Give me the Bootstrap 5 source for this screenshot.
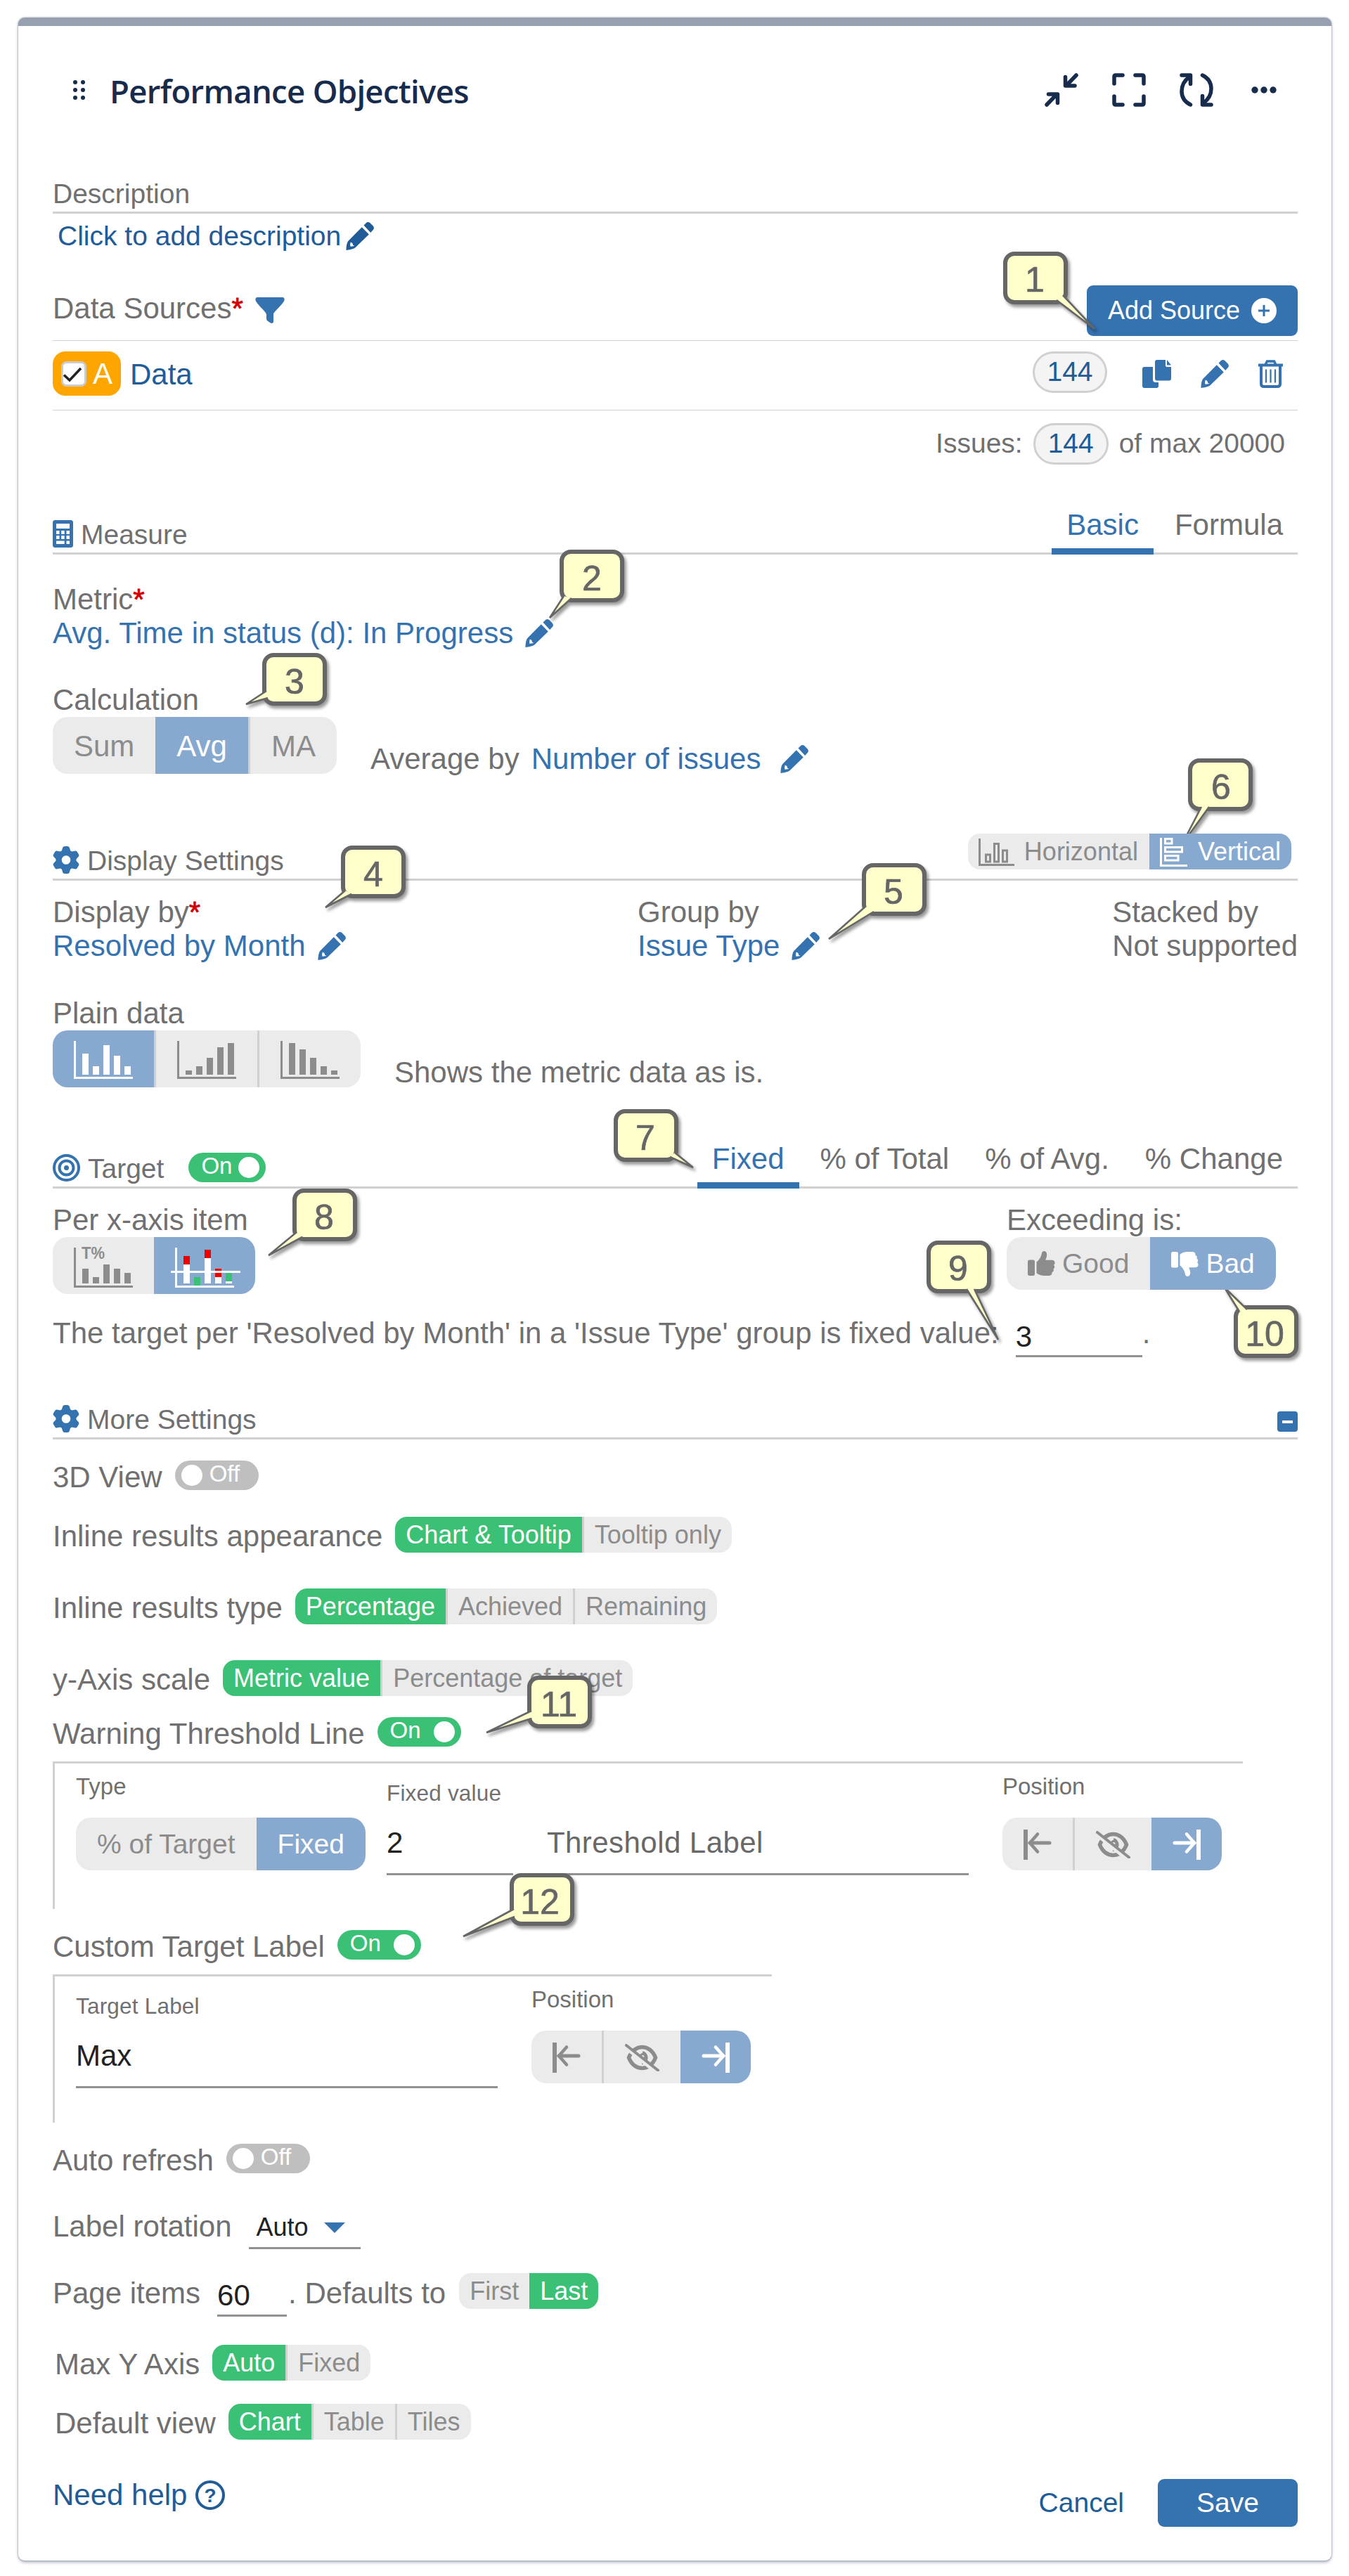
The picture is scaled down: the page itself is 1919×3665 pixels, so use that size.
<!DOCTYPE html>
<html lang="en">
<head>
<meta charset="utf-8">
<meta name="viewport" content="width=device-width, initial-scale=1">
<title>Performance Objectives</title>
<link href="https://cdn.jsdelivr.net/npm/bootstrap@5.3.0/dist/css/bootstrap.min.css" rel="stylesheet">
<style>
body{font-family:"Liberation Sans",Arial,sans-serif;font-size:42px;line-height:48px;color:#707070;background:#fff;position:relative;width:1919px;height:3665px;overflow:hidden}
svg{flex:none;display:block}
.gadget{margin:25px 25px 0 26px;height:3618px;border:0;border-top:12px solid #97a0af;border-radius:9px;box-shadow:0 0 2px 1px rgba(9,30,66,.2),0 3px 4px rgba(9,30,66,.28);padding:0 48px 0 49px;background:#fff;color:#707070;display:block}
.ln{display:flex;white-space:nowrap}
.lnk{color:#3572b0;text-decoration:none}
.lnk-dark{color:#205c98;text-decoration:none}
.req{color:#d00000;-webkit-text-stroke:.8px #d00000}
.f39{font-size:39px}
.head-row{height:182px;color:#172b4d}
.title-txt{font-family:"Open Sans","Noto Sans",sans-serif;font-weight:600;font-size:45.5px;letter-spacing:-.7px;margin:0 0 0 33px;line-height:60px;padding-top:2px}
.head-acts{margin-right:30px}
.sect{border-bottom:3px solid #d0d0d0;padding-bottom:1px;display:flex;align-items:flex-end;font-size:39px;white-space:nowrap}
.sect>svg{margin:0 11px 6px 0;color:#3572b0}
.s-desc{height:85px}.s-meas{height:128px}.s-disp{height:149px}.s-targ{height:141px}.s-more{height:117px}
.tabs{margin:0 0 -4px auto;gap:9px;font-size:42px;flex-wrap:nowrap}
.tabs .nav-link{padding:0 21px 9px;border-bottom:9px solid transparent;color:#707070;line-height:48px}
.tabs .nav-link.active{color:#3572b0;border-color:#3572b0}
.r-click{height:56px;padding:8px 0 0 7px;gap:7px;font-size:39px;align-items:center}
.r-ds{height:125px;border-bottom:1px solid #d0d0d0;align-items:flex-end;padding-bottom:6px}
.r-ds>.cap{margin-bottom:15px;display:flex}
.r-ds>svg{margin:0 0 18px 17px;color:#3572b0}
.btn-main{background:#3572b0;color:#fff;border:0;border-radius:9px;font-size:36px;line-height:48px;height:72px;min-width:300px;padding:0 30px;display:flex;align-items:center;justify-content:space-between}
.btn-main:hover{background:#3572b0;color:#fff}
.btn-save{font-size:39px;height:68px;min-width:0;width:199px;justify-content:center}
.r-a{height:99px;border-bottom:1px solid #d0d0d0;padding-top:15px;align-items:flex-start}
.r-a>a{margin:9px 0 0 13px}
.tag-a{background:#ffa500;border-radius:18px;width:97px;height:63px;color:#fff;display:flex;align-items:center;padding-left:12px;gap:9px}
.pill{border:3px solid #d0d0d0;background:#f4f4f4;border-radius:30px;width:106px;height:59px;display:flex;align-items:center;justify-content:center;font-size:39px;color:#205c98;line-height:48px;padding-bottom:2px}
.r-a .acts{margin-left:auto;padding-right:21px;gap:42px;display:flex;color:#3572b0}
.r-a .acts svg{margin-top:12px}
.r-a .acts .pill{margin-right:8px}
.r-iss{margin-top:17px;height:60px;gap:15px;justify-content:flex-end;align-items:center;padding-right:18px;font-size:39px}
.r-iss .pill{padding-bottom:0;width:107px}
.blk{padding-top:40px}
.blk .ln{align-items:center}
.e-a{margin-left:17px}.e-b{margin-left:28px}.e-c{margin-left:17px}
.btn-group.seg{border-radius:21px;overflow:hidden;flex:none;vertical-align:top}
.btn-group.seg>.btn{margin:0!important;border:0;border-radius:0;background:#ebebeb;color:#8c8c8c;padding:2px 30px 0;font-size:42px;line-height:48px;flex:none;display:flex;align-items:center;height:81px}
.btn-group.seg>.btn+.btn:not(.active){border-left:3px solid #d0d0d0}
.btn-group.seg>.btn.active{background:#87a9d0;color:#fff}
.btn-group.seg.md>.btn{height:75px;font-size:39px;padding-top:1px}
.btn-group.seg.sm>.btn{height:51px;font-size:36px;padding:1px 15px 0}
.btn-group.seg.sm{border-radius:17px}
.btn-group.seg.grn>.btn.active{background:#3bc175}
.btn-group.seg.sm>.btn.hz{padding-right:16px;gap:14px}
.btn-group.seg.sm>.btn.vt{gap:15px}
.btn-group.seg.md>.btn.th{gap:10px}
.t57{margin-top:4px}
.calc-lbl{margin-top:47px}
.r-calc{height:84px;align-items:flex-start!important}
.r-calc>.side{margin:36px 0 0 48px;display:flex;align-items:center}
.hv{margin:0 9px 12px auto}
.r-cols{padding-top:21px}
.c1{width:832px}
.c3{margin-left:auto}
.mt-plain{margin-top:48px}
.tg{width:119px;height:42px;border-radius:21px;display:flex;align-items:center;font-size:33px;line-height:36px;color:#fff;flex:none;padding:0 9px 0 18px;justify-content:space-between}
.tg b{width:30px;height:30px;border-radius:50%;background:#fff}
.tg span{padding-bottom:5px}
.tg.on{background:#3bc175}
.tg.off{background:#bfbfbf;justify-content:flex-start;padding:0 9px;gap:10px}
.s-targ .tg{width:110px;margin:0 0 5px 35px}
.r-per{padding-top:21px;height:150px}
.c-exc{margin-left:auto;width:414px}
.r-sent{height:59px;margin-top:31px}
.r-sent>span{padding-top:1px}
.fld{border-bottom:3px solid #919191;color:#222;align-self:flex-end}
.w-sent{width:180px;margin-left:24px;padding-bottom:2px}
.minus{width:29px;height:29px;background:#3572b0;border-radius:4px;margin:0 0 7px auto;display:flex;align-items:center;justify-content:center}
.minus i{width:15px;height:4px;background:#fff}
.opt{align-items:center;gap:18px}
.opt>.cap{padding-top:5px}
.h42{height:42px}.h51{height:51px}
.g21{margin-top:21px}.g30{margin-top:30px}.g33{margin-top:33px}.g34{margin-top:34px}.g38{margin-top:38px}.g40{margin-top:40px}.g51{margin-top:51px}
.in3{padding-left:3px}
.pnl{border-top:3px solid #d0d0d0;border-left:3px solid #d0d0d0;padding-left:30px;display:flex;white-space:nowrap}
.pnl-a{width:1693px;height:210px}
.pnl-b{width:1023px;height:211px}
.col-s{padding-top:15px;font-size:33px;line-height:36px}
.col-s .seg{margin-top:26px;display:flex}
.col-f{padding-top:24px;font-size:31.5px;line-height:36px;letter-spacing:.2px}
.col-f .val{margin-top:29px;font-size:42px;line-height:48px;padding-bottom:19px;border-bottom:3px solid #919191;color:#222;letter-spacing:0}
.col-f .val.ph{color:#686868;letter-spacing:.45px}
.w180{width:180px;margin-left:30px}.w600{width:600px}.ml48{margin-left:48px}
.sel{width:159px;margin-left:24px;font-size:36px;padding:0 0 4px 11px;display:flex;align-items:center;gap:22px}
.r-rot{height:57px}
.r-rot>span{padding-top:1px}
.r-page{height:62px}
.r-page>.cap{padding-top:5px}
.w-page{width:99px;margin:0 2px 0 24px;padding-bottom:3px}
.r-page>.seg{margin-left:19px}
.r-foot{margin-top:56px;height:68px;align-items:center}
.need{display:flex;align-items:center;gap:9px;margin-bottom:22px}
.notes{position:absolute;left:0;top:0;pointer-events:none}
.notes .bx{fill:#ffc;stroke:#666;stroke-width:6}
.notes polyline{fill:#ffc;stroke:#666;stroke-width:2.6;stroke-linejoin:bevel}
.notes text{font:50px "Liberation Sans",Arial,sans-serif;fill:#666;text-anchor:middle;stroke:#666;stroke-width:.7}
.notes g{filter:drop-shadow(3px 4px 2px rgba(0,0,0,.4))}
</style>
<script src="https://cdn.jsdelivr.net/npm/bootstrap@5.3.0/dist/js/bootstrap.bundle.min.js"></script>
</head>
<body>
<svg width="0" height="0" class="position-absolute">
<symbol id="pen" viewBox="0 0 40 40"><path fill="currentColor" fill-rule="evenodd" d="M25.500 4.500l3.500-3.500c1.500-1.300 4-1.200 5.500.2l3.700 3.700c2 2 2.200 4.200.8 5.800L35.200 15zM22.800 7.200L32.800 17.500 13.500 36.200C11 38.500 4 39.500.5 40 .5 36.500 1 29.500 3.500 26.800zM6.800 28.500C6 31 6 33 6.500 34.800l6-.800-2.300-1.300-.8-2.700z"/></symbol>
<symbol id="gear" viewBox="0 0 38 39"><g fill="currentColor"><circle cx="19" cy="19.500" r="14.500"/><path id="tooth" d="M14 2.500Q14.500 0 17 0h4q2.500 0 3 2.500l1.500 5v24L24 36.500Q23.500 39 21 39h-4q-2.500 0-3-2.500L12.500 31.500v-24z"/><use href="#tooth" transform="rotate(60 19 19.500)"/><use href="#tooth" transform="rotate(120 19 19.500)"/></g><circle cx="19" cy="19.500" r="6.300" fill="#fff"/></symbol>
<symbol id="thumb" viewBox="0 0 39 36"><g fill="currentColor"><rect y="12.500" width="10" height="22.500" rx="2.500"/><path d="M12.500 15.500C17 12 19 8 20 3c.7-4.500 7.200-4 7.200 2 0 3-1.200 5.500-2 7.700h9c5 0 5.500 5.800 2.600 7 2 1.500 1.700 4.800-.4 5.600 1.200 2 0 4.400-2 5 .5 2.700-1.200 4.700-4.400 4.700h-6c-5 0-8-1-11.500-3.700z"/></g></symbol>
<symbol id="pl" viewBox="0 0 40 43"><g stroke="currentColor" fill="none"><path d="M3 0v43" stroke-width="6"/><path d="M9 19h28" stroke-width="5" stroke-linecap="round"/><path d="M20 6.500L9 19l11 12.500" stroke-width="4.500" stroke-linecap="round"/></g></symbol>
<symbol id="eye" viewBox="0 0 49 39"><g fill="none" stroke="currentColor"><path d="M5.500 19.500C13 -.5 36 -.5 43.500 19.500 36 39.500 13 39.500 5.500 19.500z" stroke-width="5.500"/><path d="M25 12a8 8 0 0 1-1 15.500" stroke-width="4"/><circle cx="25.500" cy="18" r="3.500" stroke-width="3"/></g><path d="M1 5L45 41" stroke="#ebebeb" stroke-width="5"/><path d="M2 2L47 37.500" stroke="currentColor" stroke-width="4" stroke-linecap="round"/></symbol>
</svg>

<main class="card gadget">
<header class="ln head-row align-items-center">
<svg class="ms-4" width="24" height="30" viewBox="0 0 24 30" fill="#172b4d"><circle cx="8" cy="4" r="3"/><circle cx="19" cy="4" r="3"/><circle cx="8" cy="15" r="3"/><circle cx="19" cy="15" r="3"/><circle cx="8" cy="26" r="3"/><circle cx="19" cy="26" r="3"/></svg>
<h1 class="title-txt">Performance Objectives</h1>
<div class="d-flex ms-auto align-items-center gap-5 head-acts">
<svg width="48" height="48" viewBox="0 0 48 48" fill="none" stroke="#172b4d" stroke-width="5.500" stroke-linecap="round" stroke-linejoin="round"><path d="M45 3L31 17.500M29.500 5.500V18H43M3 45l14-14.500M18.500 42.500V30H5.500"/></svg>
<svg width="48" height="48" viewBox="0 0 48 48" fill="none" stroke="#172b4d" stroke-width="5.500" stroke-linecap="round" stroke-linejoin="round"><path d="M3 15V5q0-2 2-2h10M33 3h10q2 0 2 2v10M45 33v10q0 2-2 2H33M15 45H5q-2 0-2-2V33"/></svg>
<svg width="48" height="48" viewBox="0 0 48 48" fill="none" stroke="#172b4d" stroke-width="5.500" stroke-linecap="round" stroke-linejoin="round"><path d="M3 3h12.500v12.500M14.500 5C-1 16-1 37 15.500 45M45 45H32.500V32.500M33.500 43C49 32 49 11 32.500 3"/></svg>
<svg width="42" height="12" viewBox="0 0 42 12" fill="#172b4d"><circle cx="11" cy="6" r="4.700"/><circle cx="24" cy="6" r="4.700"/><circle cx="37" cy="6" r="4.700"/></svg>
</div>
</header>

<div class="sect s-desc">Description</div>
<div class="ln r-click lnk-dark"><span>Click to add description</span><svg width="40" height="40"><use href="#pen"/></svg></div>
<div class="ln r-ds"><div class="cap">Data Sources<span class="req">*</span></div>
<svg width="42" height="37" viewBox="0 0 42 37"><path fill="currentColor" d="M.5 4Q0 0 3 0h36q3 0 2.500 4C40.500 9 26 21 26 24v11q-1 3-4.500 1.200L17.500 33.500Q16 32.500 16 30.500V24C15 20 1.500 9 .5 4z"/></svg>
<button class="btn btn-main ms-auto">Add Source<svg width="36" height="36" viewBox="0 0 36 36"><circle cx="18" cy="18" r="18" fill="#fff"/><path d="M10 18h16M18 10v16" stroke="#3572b0" stroke-width="3"/></svg></button></div>

<div class="ln r-a">
<div class="tag-a"><svg width="36" height="36" viewBox="0 0 36 36"><rect x="1.500" y="1.500" width="33" height="33" rx="6" fill="#fff" stroke="#ccc" stroke-width="3"/><path d="M4 19.500l8 7.500L28 10" fill="none" stroke="#222" stroke-width="3.600"/></svg>A</div>
<a class="lnk-dark">Data</a>
<div class="acts"><div class="pill">144</div>
<svg width="41" height="40" viewBox="0 0 41 40" fill="currentColor"><path d="M21 0h12v8q0 2 2 2h6v16.500q0 3-3 3H21q-3 0-3-3V3q0-3 3-3zM35 0l6 7.500h-6zM3 10h12v18q0 4 4 4h4v5q0 3-3 3H3q-3 0-3-3V13q0-3 3-3z"/></svg>
<svg width="40" height="40"><use href="#pen"/></svg>
<svg width="35" height="40" viewBox="0 0 35 40" fill="none" stroke="currentColor"><path d="M0 7.500h35" stroke-width="4"/><path d="M10 7L12.500 2h10L25 7" stroke-width="3.500"/><path d="M4 8v26q0 4 4 4h19q4 0 4-4V8" stroke-width="4"/><path d="M11 13.500v19M17.500 13.500v19M24 13.500v19" stroke-width="2.200"/></svg></div>
</div>
<div class="ln r-iss"><span>Issues:</span><div class="pill">144</div><span>of max 20000</span></div>

<div class="sect s-meas"><svg width="29" height="39" viewBox="0 0 29 39"><rect width="29" height="39" rx="3.500" fill="currentColor"/><path fill="#fff" d="M5 5h19v7H5zM5 15h4.500v5H5zM12.200 15h4.500v5h-4.500zM19.500 15H24v5h-4.500zM5 22h4.500v5H5zM12.200 22h4.500v5h-4.500zM19.500 22H24v5h-4.500zM5 29.500h11.700v4.500H5zM19.500 29.500H24V34h-4.500z"/></svg>Measure
<nav class="nav tabs"><a class="nav-link active">Basic</a><a class="nav-link">Formula</a></nav></div>

<div class="blk">
<div class="ln">Metric<span class="req">*</span></div>
<div class="ln lnk">Avg. Time in status (d): In Progress<svg class="e-a" width="40" height="40"><use href="#pen"/></svg></div>
<div class="ln calc-lbl">Calculation</div>
<div class="ln r-calc"><div class="btn-group seg"><button class="btn">Sum</button><button class="btn active">Avg</button><button class="btn">MA</button></div>
<div class="side">Average by<span class="lnk e-a">Number of issues</span><svg class="e-b lnk" width="40" height="40"><use href="#pen"/></svg></div></div>
</div>

<div class="sect s-disp"><svg width="38" height="39"><use href="#gear"/></svg>Display Settings
<div class="btn-group seg sm hv"><button class="btn hz"><svg width="51" height="39" viewBox="0 0 51 39" fill="none" stroke="currentColor" stroke-width="3"><path d="M1.500 0v37.500H51M10.500 23h6v10h-6zM22.500 7.500h6V33h-6zM34.500 17h6v16h-6z"/></svg>Horizontal</button><button class="btn active vt"><svg width="39" height="41" viewBox="0 0 39 41" fill="none" stroke="currentColor" stroke-width="3"><path d="M1.500 0v39.500H39M7.500 1.500h9.500v6.500H7.500zM7.500 13.500h24V20h-24zM7.500 25.500h18.500V32H7.500z"/></svg>Vertical</button></div></div>

<div class="ln r-cols"><div class="c1"><div class="ln">Display by<span class="req">*</span></div><div class="ln lnk align-items-center">Resolved by Month<svg class="e-c" width="40" height="40"><use href="#pen"/></svg></div></div>
<div><div>Group by</div><div class="ln lnk align-items-center">Issue Type<svg class="e-c" width="40" height="40"><use href="#pen"/></svg></div></div>
<div class="c3"><div>Stacked by</div><div>Not supported</div></div></div>

<div class="mt-plain">Plain data</div>
<div class="ln r-calc"><div class="btn-group seg">
<button class="btn active"><svg width="84" height="54" viewBox="0 0 84 54" fill="currentColor"><path d="M0 0h3v51h81v3H0zM12 18h9v30h-9zM27 36h9v12h-9zM42 6h9v42h-9zM57 21h9v27h-9zM72 36h9v12h-9z"/></svg></button>
<button class="btn"><svg width="84" height="54" viewBox="0 0 84 54" fill="currentColor"><path d="M0 0h3v51h81v3H0zM12 42h9v6h-9zM27 36h9v12h-9zM42 24h9v24h-9zM57 9h9v39h-9zM72 3h9v45h-9z"/></svg></button>
<button class="btn"><svg width="84" height="54" viewBox="0 0 84 54" fill="currentColor"><path d="M0 0h3v51h81v3H0zM12 3h9v45h-9zM27 12h9v36h-9zM42 24h9v24h-9zM57 36h9v12h-9zM72 42h9v6h-9z"/></svg></button></div>
<div class="side">Shows the metric data as is.</div></div>

<div class="sect s-targ"><svg width="39" height="39" viewBox="0 0 39 39" fill="none" stroke="currentColor" stroke-width="4"><circle cx="19.500" cy="19.500" r="17.500"/><circle cx="19.500" cy="19.500" r="10"/><circle cx="19.500" cy="19.500" r="3.500" fill="currentColor" stroke="none"/></svg>Target<div class="tg on"><span>On</span><b></b></div>
<nav class="nav tabs"><a class="nav-link active">Fixed</a><a class="nav-link">% of Total</a><a class="nav-link">% of Avg.</a><a class="nav-link">% Change</a></nav></div>

<div class="ln r-per"><div><div>Per x-axis item</div><div class="btn-group seg">
<button class="btn"><svg class="t57" width="84" height="57" viewBox="0 0 84 57" fill="currentColor" overflow="visible"><path d="M0 0h3v54h81v3H0zM12 30h9v21h-9zM27 42h9v9h-9zM42 24h9v27h-9zM57 30h9v21h-9zM72 36h9v15h-9z"/><text x="11" y="16" font-size="23" font-weight="700" textLength="33" lengthAdjust="spacingAndGlyphs">T%</text></svg></button>
<button class="btn active"><svg class="t57" width="84" height="57" viewBox="0 0 84 57" fill="#fff" overflow="visible"><path d="M0 0h3v54h81v3H0zM12 24h9v27h-9zM42 15h9v36h-9zM57 42h9v9h-9zM72 48h9v3h-9z"/><path fill="#e00" d="M12 12h9v12h-9zM42 3h9v12h-9zM57 30h9v12h-9z"/><path fill="#3bc175" d="M27 42h9v12h-9zM72 36h9v12h-9z"/><path d="M-6 33h99v3H-6z"/></svg></button></div></div>
<div class="c-exc"><div>Exceeding is:</div><div class="btn-group seg md"><button class="btn th"><svg width="39" height="36"><use href="#thumb"/></svg>Good</button><button class="btn active th"><svg width="39" height="36" viewBox="0 0 39 36"><g transform="matrix(1 0 0 -1 0 36)"><use href="#thumb" width="39" height="36"/></g></svg>Bad</button></div></div></div>

<div class="ln r-sent"><span>The target per 'Resolved by Month' in a 'Issue Type' group is fixed value:</span><div class="fld w-sent">3</div><span>.</span></div>

<div class="sect s-more"><svg width="38" height="39"><use href="#gear"/></svg>More Settings<div class="minus"><i></i></div></div>

<div class="ln opt h42 g30"><span class="cap">3D View</span><div class="tg off"><b></b><span>Off</span></div></div>
<div class="ln opt h51 g38"><span class="cap">Inline results appearance</span><div class="btn-group seg sm grn"><button class="btn active">Chart &amp; Tooltip</button><button class="btn">Tooltip only</button></div></div>
<div class="ln opt h51 g51"><span class="cap">Inline results type</span><div class="btn-group seg sm grn"><button class="btn active">Percentage</button><button class="btn">Achieved</button><button class="btn">Remaining</button></div></div>
<div class="ln opt h51 g51"><span class="cap">y-Axis scale</span><div class="btn-group seg sm grn"><button class="btn active">Metric value</button><button class="btn">Percentage of target</button></div></div>
<div class="ln opt h42 g30"><span class="cap">Warning Threshold Line</span><div class="tg on"><span>On</span><b></b></div></div>

<div class="pnl pnl-a g21">
<div class="col-s">Type<div class="btn-group seg md"><button class="btn">% of Target</button><button class="btn active">Fixed</button></div></div>
<div class="col-f w180">Fixed value<div class="val">2</div></div>
<div class="col-f w600 ml48">&nbsp;<div class="val ph">Threshold Label</div></div>
<div class="col-s ml48">Position<div class="btn-group seg md"><button class="btn"><svg width="40" height="43"><use href="#pl"/></svg></button><button class="btn"><svg width="49" height="39"><use href="#eye"/></svg></button><button class="btn active"><svg width="40" height="43" viewBox="0 0 40 43"><g transform="matrix(-1 0 0 1 40 0)"><use href="#pl" width="40" height="43"/></g></svg></button></div></div>
</div>

<div class="ln opt h42 g30"><span class="cap">Custom Target Label</span><div class="tg on"><span>On</span><b></b></div></div>
<div class="pnl pnl-b g21">
<div class="col-f w600">Target Label<div class="val">Max</div></div>
<div class="col-s ml48">Position<div class="btn-group seg md"><button class="btn"><svg width="40" height="43"><use href="#pl"/></svg></button><button class="btn"><svg width="49" height="39"><use href="#eye"/></svg></button><button class="btn active"><svg width="40" height="43" viewBox="0 0 40 43"><g transform="matrix(-1 0 0 1 40 0)"><use href="#pl" width="40" height="43"/></g></svg></button></div></div>
</div>

<div class="ln opt h42 g30"><span class="cap">Auto refresh</span><div class="tg off"><b></b><span>Off</span></div></div>
<div class="ln r-rot g51"><span>Label rotation</span><div class="fld sel">Auto<svg width="30" height="15" viewBox="0 0 30 15"><path fill="#3572b0" d="M0 0h30L15 15z"/></svg></div></div>
<div class="ln r-page g34"><span class="cap">Page items</span><div class="fld w-page">60</div><span class="cap">. Defaults to</span><div class="btn-group seg sm grn h51"><button class="btn">First</button><button class="btn active">Last</button></div></div>
<div class="ln opt h51 g40 in3"><span class="cap">Max Y Axis</span><div class="btn-group seg sm grn"><button class="btn active">Auto</button><button class="btn">Fixed</button></div></div>
<div class="ln opt h51 g33 in3"><span class="cap">Default view</span><div class="btn-group seg sm grn"><button class="btn active">Chart</button><button class="btn">Table</button><button class="btn">Tiles</button></div></div>

<footer class="ln r-foot"><a class="lnk-dark need">Need help<svg width="46" height="42" viewBox="-3 0 46 42"><circle cx="21" cy="21" r="19" fill="none" stroke="currentColor" stroke-width="4"/><text x="21" y="31" font-size="28" font-weight="700" fill="currentColor" text-anchor="middle">?</text></svg></a>
<a class="lnk-dark f39 ms-auto me-5">Cancel</a><button class="btn btn-main btn-save">Save</button></footer>
</main>

<svg class="notes" width="1919" height="3665" viewBox="0 0 1919 3665">
<g><rect class="bx" x="1430" y="361" width="86" height="69" rx="13"/><polyline points="1512,420 1557,468 1503,427"/><text x="1472" y="415">1</text></g>
<g><rect class="bx" x="799" y="785" width="86" height="69" rx="13"/><polyline points="802,848 782,879 813,851"/><text x="842" y="840">2</text></g>
<g><rect class="bx" x="376" y="932" width="86" height="69" rx="13"/><polyline points="379,983 350,1002 381,993"/><text x="419" y="987">3</text></g>
<g><rect class="bx" x="488" y="1206" width="86" height="69" rx="13"/><polyline points="491,1267 463,1291 500,1272"/><text x="531" y="1261">4</text></g>
<g><rect class="bx" x="1229" y="1231" width="86" height="69" rx="13"/><polyline points="1232,1289 1179,1336 1243,1297"/><text x="1271" y="1286">5</text></g>
<g><rect class="bx" x="1693" y="1082" width="86" height="69" rx="13"/><polyline points="1709,1148 1681,1202 1720,1148"/><text x="1737" y="1137">6</text></g>
<g><rect class="bx" x="876" y="1581" width="86" height="69" rx="13"/><polyline points="960,1640 986,1661 953,1646"/><text x="918" y="1636">7</text></g>
<g><rect class="bx" x="419" y="1694" width="86" height="69" rx="13"/><polyline points="422,1753 382,1786 430,1760"/><text x="461" y="1749">8</text></g>
<g><rect class="bx" x="1321" y="1768" width="86" height="69" rx="13"/><polyline points="1375,1834 1420,1906 1386,1834"/><text x="1363" y="1822">9</text></g>
<g><rect class="bx" x="1758" y="1860" width="86" height="69" rx="13"/><polyline points="1763,1866 1742,1832 1774,1863"/><text x="1799" y="1915">10</text></g>
<g><rect class="bx" x="753" y="2387" width="86" height="69" rx="13"/><polyline points="756,2434 692,2465 756,2445"/><text x="795" y="2442">11</text></g>
<g><rect class="bx" x="728" y="2668" width="86" height="69" rx="13"/><polyline points="731,2716 659,2755 732,2727"/><text x="768" y="2723">12</text></g>
</svg>
</body>
</html>
